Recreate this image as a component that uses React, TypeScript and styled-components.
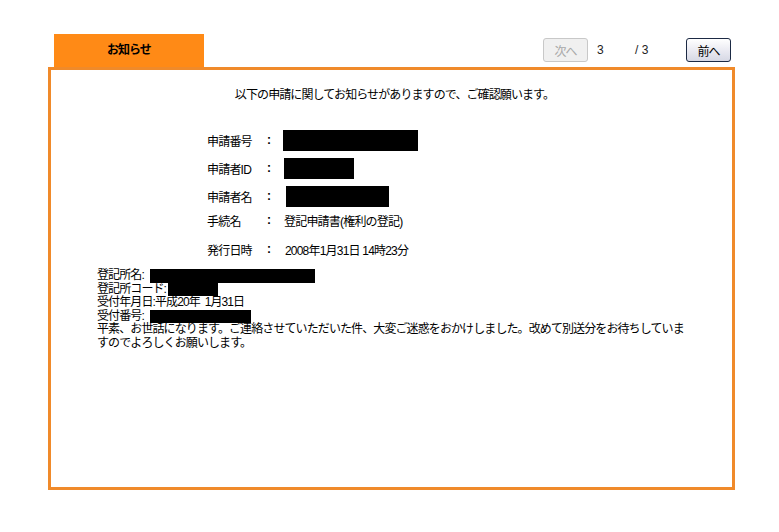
import React from "react";
import styled, {createGlobalStyle} from "styled-components";

const GlobalStyle = createGlobalStyle`
  body {
    margin: 0;
    background: #fff;
    color: #000;
    font-family: "Liberation Sans", "Noto Sans CJK JP", sans-serif;
    font-size: 12px;
  }
`;

const Page = styled.div`
  width: 687px;
  padding: 34px 0 0 48px;
`;

const Header = styled.div`
  display: flex;
  align-items: flex-start;
  height: 33px;
`;

const Tab = styled.div`
  margin-left: 6px;
  width: 150px;
  height: 33px;
  box-sizing: border-box;
  padding-top: 6px;
  background: #ff8a16;
  font-weight: bold;
  text-align: center;
  letter-spacing: -1px;
`;

const Pager = styled.div`
  margin-left: auto;
  margin-right: 4px;
  margin-top: 4px;
  display: flex;
  align-items: center;
  height: 24px;
`;

const PageButton = styled.button<{ $disabled?: boolean }>`
  width: 45px;
  height: 24px;
  padding: 0;
  box-sizing: border-box;
  border-radius: 3px;
  font-family: inherit;
  font-size: 12px;
  letter-spacing: -1px;
  border: 1px solid ${p => p.$disabled ? "#c8c8c8" : "#1c2a44"};
  color: ${p => p.$disabled ? "#a8a8a8" : "#000"};
  background: ${p => p.$disabled
    ? "#f0f0f0"
    : "linear-gradient(#ffffff, #e9e9f1 55%, #d6d8e4)"};
`;

const PageNum = styled.span<{ $w: number }>`
  width: ${p => p.$w}px;
  font-family: "Liberation Sans", sans-serif;
  font-size: 12px;
  color: #222;
`;

const Box = styled.div`
  height: 423px;
  box-sizing: border-box;
  border: 3px solid #f08a2a;
  padding-top: 18px;
`;

const Intro = styled.div`
  text-align: center;
  letter-spacing: -0.9px;
  line-height: 14px;
  padding-left: 6px;
`;

const Fields = styled.div`
  margin: 24px 0 0 156px;
  display: grid;
  grid-template-columns: 60px 16px auto;
  grid-template-rows: 28px 28px 28px 20px 38px;
  align-items: center;
  letter-spacing: -0.8px;
`;

const Colon = styled.span`
  font-weight: bold;
`;

const Value = styled.span<{ $off?: number }>`
  padding-left: ${p => p.$off ?? 0}px;
`;

const Mask = styled.span<{ $w: number; $h?: number; $ml?: number }>`
  display: inline-block;
  vertical-align: middle;
  width: ${p => p.$w}px;
  height: ${p => p.$h ?? 21}px;
  margin-left: ${p => p.$ml ?? 0}px;
  background: #000;
`;

const Notice = styled.div`
  margin: 1px 0 0 46px;
  width: 594px;
  line-height: 13.4px;
  letter-spacing: -0.9px;
`;

const Line = styled.div`
  display: flex;
  align-items: center;
  gap: 2px;
`;

const fields: { label: string; value?: string; mask?: number; off?: number }[] = [
  {label: "申請番号", mask: 135, off: 0},
  {label: "申請者ID", mask: 70, off: 1},
  {label: "申請者名", mask: 103, off: 3},
  {label: "手続名", value: "登記申請書(権利の登記)", off: 1},
  {label: "発行日時", value: "2008年1月31日 14時23分", off: 2},
];

export default function App() {
  return (
    <Page>
      <GlobalStyle/>
      <Header>
        <Tab>お知らせ</Tab>
        <Pager>
          <PageButton $disabled>次へ</PageButton>
          <PageNum $w={38} style={{paddingLeft: 9}}>3</PageNum>
          <PageNum $w={51}>/ 3</PageNum>
          <PageButton>前へ</PageButton>
        </Pager>
      </Header>
      <Box>
        <Intro>以下の申請に関してお知らせがありますので、ご確認願います。</Intro>
        <Fields>
          {fields.map(f => (
            <React.Fragment key={f.label}>
              <span>{f.label}</span>
              <Colon>:</Colon>
              <Value $off={f.off}>{f.mask ? <Mask $w={f.mask}/> : f.value}</Value>
            </React.Fragment>
          ))}
        </Fields>
        <Notice>
          <Line>登記所名:<Mask $w={165} $h={14} $ml={4}/></Line>
          <Line>登記所コード:<Mask $w={50} $h={13}/></Line>
          <Line>受付年月日:平成20年&nbsp;&nbsp;1月31日</Line>
          <Line>受付番号:<Mask $w={101} $h={13} $ml={4}/></Line>
          <div>平素、お世話になります。ご連絡させていただいた件、大変ご迷惑をおかけしました。改めて別送分をお待ちしていますのでよろしくお願いします。</div>
        </Notice>
      </Box>
    </Page>
  );
}
